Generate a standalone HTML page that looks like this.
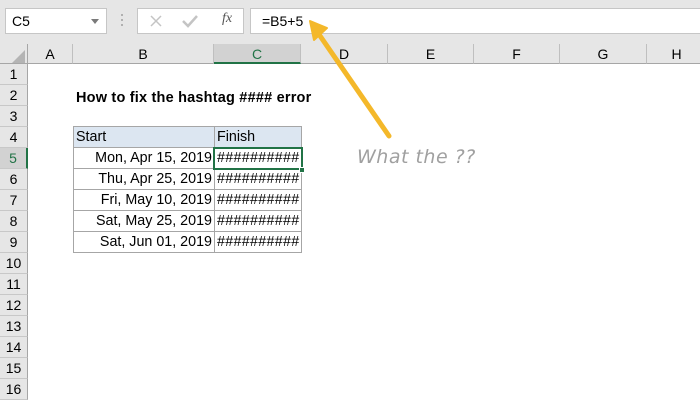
<!DOCTYPE html>
<html><head><style>
body{margin:0;width:700px;height:400px;position:relative;overflow:hidden;background:#fff;font-family:"Liberation Sans",sans-serif;}
.a{position:absolute;box-sizing:border-box;}
.ch{position:absolute;top:44px;height:20px;border-right:1px solid #bfbfbf;border-bottom:1px solid #a6a6a6;text-align:center;font-size:14px;line-height:21px;color:#000;background:#e6e6e6;box-sizing:border-box;}
.rh{position:absolute;left:0;width:28px;height:21px;border-bottom:1px solid #c8c8c8;border-right:1px solid #a6a6a6;text-align:center;font-size:14px;line-height:21px;background:#e6e6e6;box-sizing:border-box;}
.c{position:absolute;height:21px;font-size:14.3px;line-height:21px;border-right:1px solid #a6a6a6;border-bottom:1px solid #a6a6a6;box-sizing:border-box;padding:0 2px;white-space:nowrap;overflow:hidden;}
.h{letter-spacing:0.3px}
</style></head><body>
<div class="a" style="left:0;top:0;width:700px;height:44px;background:#e6e6e6"></div>
<div class="a" style="left:5px;top:8px;width:102px;height:26px;background:#fff;border:1px solid #c6c6c6;font-size:14px;line-height:24px;padding-left:6px">C5</div>
<div class="a" style="left:91px;top:19px;width:0;height:0;border-left:4px solid transparent;border-right:4px solid transparent;border-top:5px solid #7a7a7a"></div>
<div class="a" style="left:121px;top:14px;width:2px;height:2px;background:#b0b0b0;box-shadow:0 5px #b0b0b0,0 10px #b0b0b0"></div>
<div class="a" style="left:137px;top:8px;width:107px;height:26px;background:#fff;border:1px solid #c6c6c6"></div>
<svg class="a" style="left:0;top:0" width="260" height="40">
<path d="M151 16 L161 26 M161 16 L151 26" stroke="#c4c4c4" stroke-width="1.5"/>
<path d="M183 21 L188 26 L197 16" stroke="#c4c4c4" stroke-width="2.5" fill="none"/>
</svg>
<div class="a" style="left:222px;top:11px;font-size:14px;color:#555;font-style:italic;font-family:'Liberation Serif',serif">fx</div>
<div class="a" style="left:250px;top:8px;width:452px;height:26px;background:#fff;border:1px solid #c6c6c6;font-size:14px;line-height:24px;padding-left:11px">=B5+5</div>

<div class="a" style="left:0;top:44px;width:28px;height:20px;background:#e6e6e6;border-right:1px solid #a6a6a6;border-bottom:1px solid #a6a6a6"></div>
<div class="a" style="left:12px;top:50px;width:0;height:0;border-left:13px solid transparent;border-bottom:13px solid #b4b4b4"></div>
<div class="ch" style="left:28px;width:45px">A</div>
<div class="ch" style="left:73px;width:141px">B</div>
<div class="ch" style="left:214px;width:87px;background:#d2d2d2;color:#217346;border-bottom:2px solid #217346">C</div>
<div class="ch" style="left:301px;width:87px">D</div>
<div class="ch" style="left:388px;width:86px">E</div>
<div class="ch" style="left:474px;width:86px">F</div>
<div class="ch" style="left:560px;width:87px">G</div>
<div class="ch" style="left:647px;width:60px">H</div>

<div class="rh" style="top:64px">1</div>
<div class="rh" style="top:85px">2</div>
<div class="rh" style="top:106px">3</div>
<div class="rh" style="top:127px">4</div>
<div class="rh" style="top:148px;background:#d2d2d2;color:#217346;border-right:2px solid #217346">5</div>
<div class="rh" style="top:169px">6</div>
<div class="rh" style="top:190px">7</div>
<div class="rh" style="top:211px">8</div>
<div class="rh" style="top:232px">9</div>
<div class="rh" style="top:253px">10</div>
<div class="rh" style="top:274px">11</div>
<div class="rh" style="top:295px">12</div>
<div class="rh" style="top:316px">13</div>
<div class="rh" style="top:337px">14</div>
<div class="rh" style="top:358px">15</div>
<div class="rh" style="top:379px">16</div>

<div class="a" style="left:76px;top:88px;font-size:14.5px;font-weight:bold;line-height:21px;letter-spacing:0.2px">How to fix the hashtag #### error</div>

<div class="a" style="left:73px;top:126px;width:229px;height:1px;background:#a6a6a6"></div>
<div class="a" style="left:73px;top:126px;width:1px;height:127px;background:#a6a6a6"></div>
<div class="c" style="left:74px;top:127px;width:141px;background:#dce6f1">Start</div>
<div class="c" style="left:215px;top:127px;width:87px;background:#dce6f1">Finish</div>
<div class="c" style="left:74px;top:148px;width:141px;text-align:right">Mon, Apr 15, 2019</div>
<div class="c h" style="left:215px;top:148px;width:87px">##########</div>
<div class="c" style="left:74px;top:169px;width:141px;text-align:right">Thu, Apr 25, 2019</div>
<div class="c h" style="left:215px;top:169px;width:87px">##########</div>
<div class="c" style="left:74px;top:190px;width:141px;text-align:right">Fri, May 10, 2019</div>
<div class="c h" style="left:215px;top:190px;width:87px">##########</div>
<div class="c" style="left:74px;top:211px;width:141px;text-align:right">Sat, May 25, 2019</div>
<div class="c h" style="left:215px;top:211px;width:87px">##########</div>
<div class="c" style="left:74px;top:232px;width:141px;text-align:right">Sat, Jun 01, 2019</div>
<div class="c h" style="left:215px;top:232px;width:87px">##########</div>

<div class="a" style="left:213px;top:147px;width:90px;height:23px;border:2px solid #217346"></div>
<div class="a" style="left:299px;top:167px;width:6px;height:6px;background:#217346;border:1px solid #fff"></div>

<svg class="a" style="left:0;top:0" width="700" height="400">
<line x1="389" y1="136" x2="316" y2="30" stroke="#f4b82a" stroke-width="5" stroke-linecap="round"/>
<polygon points="310,21 327,28 314,40" fill="#f4b82a" stroke="#f4b82a" stroke-width="2" stroke-linejoin="round"/>
</svg>
<div class="a" style="left:357px;top:146px;font-size:19px;color:#a0a0a0;font-style:italic;letter-spacing:0.5px;font-family:'DejaVu Sans',sans-serif">What the ??</div>
</body></html>
